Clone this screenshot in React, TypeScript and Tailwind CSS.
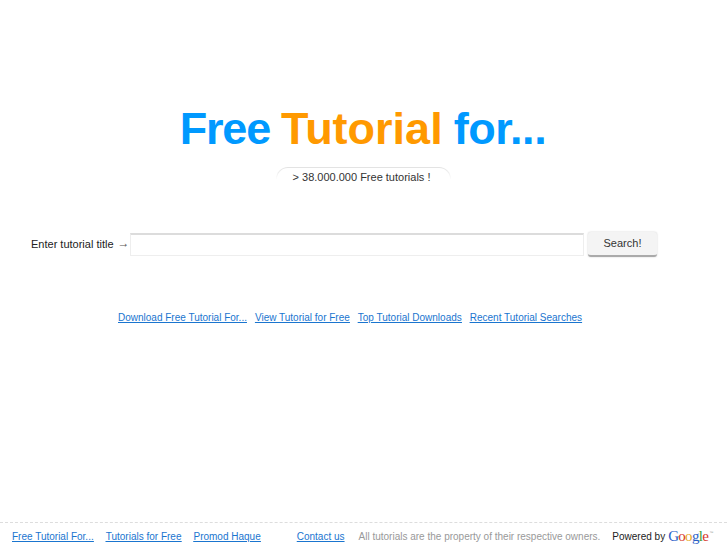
export default function App() {
  return (
    <div className="flex h-[545px] flex-col overflow-hidden bg-white font-['Liberation_Sans',Arial,sans-serif] text-[10px] text-[#222]">
      <main className="flex-1">
        <h1 className="mt-[102px] pr-[1px] text-center text-[45px] leading-[54px] font-bold [word-spacing:-1.5px] text-[#0099ff]">
          <span className="tracking-[-1.2px]">Free</span>{" "}
          <span className="text-[#ff9900]">Tutorial</span>{" "}
          <span className="tracking-[-0.4px]">for...</span>
        </h1>
        {/* pill: border fades out downward */}
        <div className="mx-auto mt-[11px] w-[175px] rounded-t-[12px] bg-gradient-to-b from-[#e2e2e2] to-white to-[60%] px-px pt-px">
          <div className="h-[20px] rounded-t-[11px] bg-white pt-[2px] pr-[4px] text-center text-[11px] leading-[14px] text-[#333]">
            &gt; 38.000.000 Free tutorials !
          </div>
        </div>

        <form className="mt-[44px] flex items-center pl-[31px]">
          <label className="flex w-[99px] items-center whitespace-nowrap text-[11px] leading-none text-[#222]">
            Enter tutorial title
            <span className="mb-[3px] ml-[4px] text-[12px] text-[#555]">→</span>
          </label>
          <input className="h-[23px] w-[454px] border border-t-2 border-[#eeeeee] border-t-[#dcdcdc] bg-white outline-none" />
          <button
            type="button"
            className="ml-[4px] h-[25px] w-[69px] rounded-[3px] border-b-2 border-[#aaaaaa] bg-[#f4f4f4] text-[11px] text-[#333] shadow-[0_0_2px_#cccccc]"
          >
            Search!
          </button>
        </form>

        <nav className="mt-[53px] flex gap-[8px] whitespace-nowrap pl-[118px] text-[10px] text-[#1a75cf] underline">
          <a href="#">Download Free Tutorial For...</a>
          <a href="#">View Tutorial for Free</a>
          <a href="#">Top Tutorial Downloads</a>
          <a href="#">Recent Tutorial Searches</a>
        </nav>
      </main>

      <footer className="flex h-[23px] items-center whitespace-nowrap border-t border-dashed border-[#dddddd] pt-[4px] pl-[12px] text-[10px]">
        <div className="flex gap-[12px] text-[#1a75cf] underline">
          <a href="#">Free Tutorial For...</a>
          <a href="#">Tutorials for Free</a>
          <a href="#">Promod Haque</a>
        </div>
        <a href="#" className="ml-[36px] text-[#1a75cf] underline">Contact us</a>
        <span className="ml-[14px] text-[#999999]">All tutorials are the property of their respective owners.</span>
        <span className="ml-[12px] text-[#222]">Powered by</span>
        <span className="ml-[3px] font-['Liberation_Serif',serif] text-[15px] leading-none tracking-[-0.7px]">
          <span className="text-[#2a5fc8]">G</span>
          <span className="text-[#d8372a]">o</span>
          <span className="text-[#e8a81c]">o</span>
          <span className="text-[#2a5fc8]">g</span>
          <span className="text-[#3a9a3a]">l</span>
          <span className="text-[#d8372a]">e</span>
        </span>
        <span className="mb-[6px] ml-px text-[4px] leading-none text-[#999999]">™</span>
      </footer>
    </div>
  );
}
